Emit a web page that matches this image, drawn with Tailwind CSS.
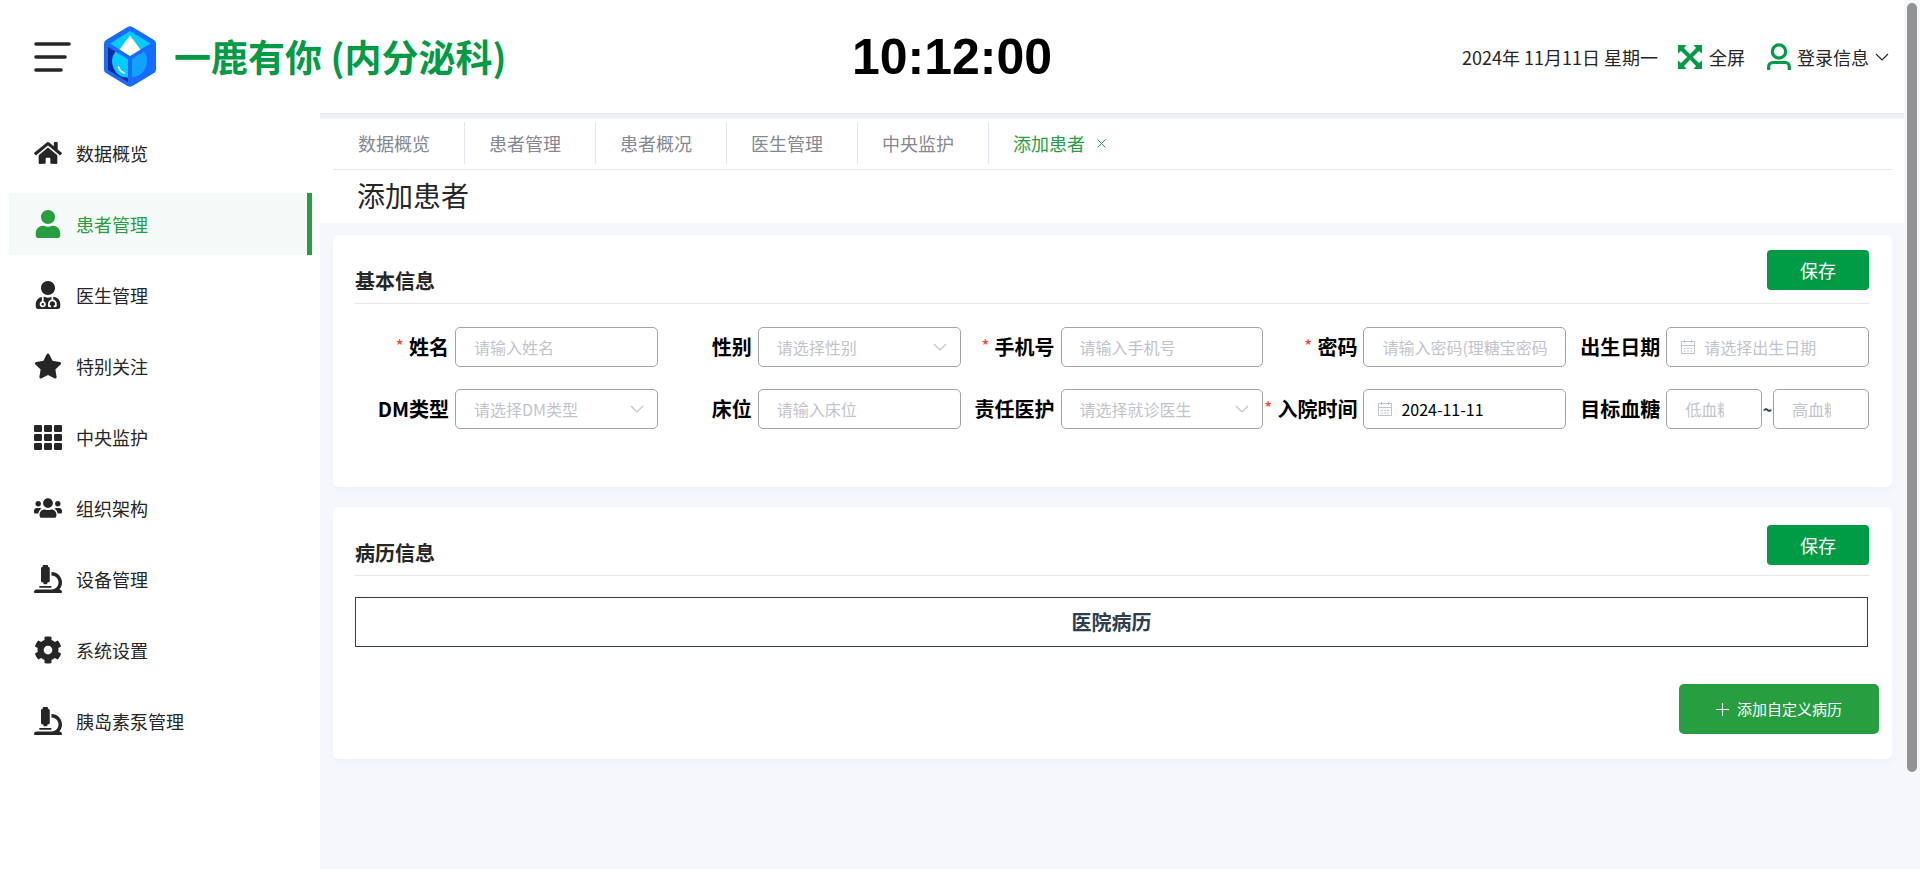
<!DOCTYPE html>
<html lang="zh-CN">
<head>
<meta charset="utf-8">
<title>添加患者</title>
<script src="https://cdn.jsdelivr.net/npm/@tailwindcss/browser@4"></script>
</head>
<body class="flex h-screen overflow-hidden bg-[#f5f7fb] font-['Noto_Sans_CJK_SC',sans-serif] font-normal text-[#262626]">
<svg class="hidden">
  <symbol id="microscope" viewBox="0 0 512 512"><path d="M160 320h12v16c0 8.84 7.16 16 16 16h40c8.84 0 16-7.16 16-16v-16h12c17.67 0 32-14.33 32-32V64c0-17.67-14.33-32-32-32V16c0-8.84-7.16-16-16-16h-64c-8.84 0-16 7.16-16 16v16c-17.67 0-32 14.33-32 32v224c0 17.67 14.33 32 32 32zm304 128h-1.29C493.24 413.99 512 369.2 512 320c0-105.88-86.12-192-192-192v64c70.58 0 128 57.42 128 128s-57.42 128-128 128H48c-26.51 0-48 21.49-48 48 0 8.84 7.16 16 16 16h480c8.84 0 16-7.16 16-16 0-26.51-21.49-48-48-48zm-360-32h208c4.42 0 8-3.58 8-8v-16c0-4.42-3.58-8-8-8H104c-4.42 0-8 3.58-8 8v16c0 4.42 3.58 8 8 8z"/></symbol>
  <symbol id="chevron" viewBox="0 0 14 8"><path d="M1 1l6 6 6-6" fill="none" stroke="currentColor" stroke-width="1.2"/></symbol>
  <symbol id="calendar" viewBox="0 0 16 16"><g fill="none" stroke="currentColor"><path d="M1.500 2.500h13v12h-13zM1.500 6.500h13M4.500 1v3M11.500 1v3"/><path d="M4 9.500h8M4 12h8" stroke-dasharray="2 1"/></g></symbol>
</svg>
<div class="flex min-w-0 flex-1 flex-col">
  <header class="grid h-[113px] shrink-0 grid-cols-[1fr_auto_1fr] items-center bg-white">
    <div class="flex items-center pl-[34px]">
      <button type="button" aria-label="折叠菜单">
        <svg class="h-[30px] w-[37px]" viewBox="0 0 37 30" fill="none" stroke="#262626" stroke-width="3.600" stroke-linecap="round"><path d="M2 2h33M2 15h29M2 28h25"/></svg>
      </button>
      <svg class="ml-[33px] h-[61px] w-[52px]" viewBox="0 0 52 61">
        <path d="M23.500 1q2.500-1.500 5 0L50 14q2 1.200 2 3.500v26q0 2.300-2 3.500L28.500 60q-2.500 1.500-5 0L2 47q-2-1.200-2-3.500v-26Q0 15.200 2 14z" fill="#1a6aff"/>
        <path d="M26 5l20.500 12.500L26 30 6 17.500z" fill="#00ccff"/>
        <path d="M26 9.500l10.500 14L26 30l-10.500-6.500z" fill="#fff"/>
        <path d="M4 21l20 12v23L4 44z" fill="#0b2b9b"/>
        <path d="M11.500 25.500L24 33v18.500A15 16 0 0 1 11.500 25.500z" fill="#00ccff"/>
        <path d="M28 33l12-7.500a15 16 0 0 1-12 25.500z" fill="#0fa2ff"/>
        <path d="M14.500 41q1.500 4.500 5.500 6" stroke="#fff" stroke-width="1.800" fill="none" stroke-linecap="round"/>
      </svg>
      <h1 class="ml-[18px] text-[37px] leading-none font-bold whitespace-nowrap text-[#009b45]">一鹿有你 (内分泌科)</h1>
    </div>
    <time class="font-['Liberation_Sans',sans-serif] text-[50px] leading-none font-bold text-black">10:12:00</time>
    <div class="flex items-center justify-end pr-[15px] text-lg">
      <span class="mr-5">2024年 11月11日 星期一</span>
      <button type="button" class="mr-[22px] flex items-center gap-[7px]">
        <svg class="size-6" viewBox="0 0 24 24"><path d="M0 0h8.500L6 3l6 6.200L18 3 15.500 0H24v8.500L21 6l-6.200 6 6.200 6 3-2.500V24h-8.500l2.500-3-6-6.200L6 21l2.500 3H0v-8.500L3 18l6.200-6L3 6 0 8.500z" fill="#009b45"/></svg>
        全屏
      </button>
      <button type="button" class="flex items-center gap-[6px]">
        <svg class="h-7 w-6" viewBox="0 0 24 28" fill="none" stroke="#009b45" stroke-width="3.200"><circle cx="12" cy="8.500" r="6.700"/><path d="M1.700 27v-3.500a4 4 0 0 1 4-4h12.600a4 4 0 0 1 4 4V27"/></svg>
        登录信息
        <svg class="h-2 w-[14px]"><use href="#chevron"/></svg>
      </button>
    </div>
  </header>

  <div class="flex min-h-0 flex-1">
    <nav class="w-80 shrink-0 bg-white pt-[9px] pr-2 pl-[9px] text-lg">
      <ul class="flex flex-col gap-[9px]">
        <li><a href="#" class="flex h-[62px] items-center gap-[14px] pl-[25px]"><svg class="size-7" viewBox="0 0 576 512" fill="currentColor"><path d="M280.37 148.26L96 300.11V464a16 16 0 0 0 16 16l112.06-.29a16 16 0 0 0 15.92-16V368a16 16 0 0 1 16-16h64a16 16 0 0 1 16 16v95.64a16 16 0 0 0 16 16.050L464 480a16 16 0 0 0 16-16V300L295.67 148.26a12.19 12.19 0 0 0-15.3 0zM571.6 251.47L488 182.56V44.05a12 12 0 0 0-12-12h-56a12 12 0 0 0-12 12v72.61L318.47 43a48 48 0 0 0-61 0L4.34 251.47a12 12 0 0 0-1.6 16.9l25.5 31A12 12 0 0 0 45.15 301l235.22-193.74a12.19 12.19 0 0 1 15.3 0L530.9 301a12 12 0 0 0 16.9-1.6l25.5-31a12 12 0 0 0-1.7-16.93z"/></svg>数据概览</a></li>
        <li><a href="#" aria-current="page" class="flex h-[62px] items-center gap-[14px] border-r-5 border-[#279e40] bg-[#f4faf8] pl-[25px] text-[#279e40]"><svg class="size-7" viewBox="0 0 448 512" fill="currentColor"><path d="M224 256c70.7 0 128-57.3 128-128S294.7 0 224 0 96 57.3 96 128s57.3 128 128 128zm89.6 32h-16.7c-22.2 10.2-46.9 16-72.9 16s-50.6-5.8-72.9-16h-16.7C60.2 288 0 348.2 0 422.4V464c0 26.5 21.5 48 48 48h352c26.5 0 48-21.5 48-48v-41.6c0-74.2-60.2-134.4-134.4-134.4z"/></svg>患者管理</a></li>
        <li><a href="#" class="flex h-[62px] items-center gap-[14px] pl-[25px]"><svg class="size-7" viewBox="0 0 448 512" fill="currentColor"><path d="M224 256c70.7 0 128-57.3 128-128S294.7 0 224 0 96 57.3 96 128s57.3 128 128 128zM104 424c0 13.3 10.7 24 24 24s24-10.7 24-24-10.7-24-24-24-24 10.7-24 24zm216-135.4v49c36.5 7.4 64 39.8 64 78.4v41.7c0 7.6-5.4 14.2-12.9 15.7l-32.2 6.4c-4.3.9-8.5-1.9-9.4-6.3l-3.1-15.7c-.9-4.3 1.9-8.6 6.3-9.4l19.3-3.9V416c0-62.8-96-65.1-96 1.9v26.7l19.3 3.9c4.3.9 7.1 5.1 6.3 9.4l-3.1 15.7c-.9 4.3-5.1 7.1-9.4 6.3l-31.2-4.2c-7.9-1.1-13.8-7.8-13.8-15.9V416c0-38.6 27.5-70.9 64-78.4v-45.2c-2.2.7-4.4 1.1-6.6 1.9-18 6.3-37.3 9.8-57.4 9.8s-39.4-3.5-57.4-9.8c-7.4-2.6-14.900-4.2-22.600-5.200v81.600c23.100 6.900 40 28.100 40 53.400 0 30.900-25.100 56-56 56s-56-25.100-56-56c0-25.300 16.900-46.500 40-53.400v-80.400C48.500 301 0 355.800 0 422.400v44.800C0 491.900 20.100 512 44.800 512h358.400c24.700 0 44.800-20.100 44.800-44.800v-44.800c0-72-56.800-130.300-128-133.800z"/></svg>医生管理</a></li>
        <li><a href="#" class="flex h-[62px] items-center gap-[14px] pl-[25px]"><svg class="size-7" viewBox="0 0 576 512" fill="currentColor"><path d="M259.3 17.8L194 150.2 47.9 171.5c-26.2 3.8-36.7 36.1-17.7 54.6l105.7 103-25 145.5c-4.5 26.3 23.2 46 46.4 33.7L288 439.6l130.7 68.7c23.2 12.2 50.9-7.4 46.4-33.7l-25-145.5 105.7-103c19-18.5 8.5-50.8-17.7-54.6L382 150.2 316.7 17.8c-11.700-23.600-45.600-23.900-57.400 0z"/></svg>特别关注</a></li>
        <li><a href="#" class="flex h-[62px] items-center gap-[14px] pl-[25px]"><svg class="size-7" viewBox="0 0 28 28" fill="currentColor"><rect x="0" y="2" width="8" height="7" rx="1.200"/><rect x="10" y="2" width="8" height="7" rx="1.200"/><rect x="20" y="2" width="8" height="7" rx="1.200"/><rect x="0" y="11" width="8" height="7" rx="1.200"/><rect x="10" y="11" width="8" height="7" rx="1.200"/><rect x="20" y="11" width="8" height="7" rx="1.200"/><rect x="0" y="20" width="8" height="7" rx="1.200"/><rect x="10" y="20" width="8" height="7" rx="1.200"/><rect x="20" y="20" width="8" height="7" rx="1.200"/></svg>中央监护</a></li>
        <li><a href="#" class="flex h-[62px] items-center gap-[14px] pl-[25px]"><svg class="size-7" viewBox="0 0 640 512" fill="currentColor"><path d="M96 224c35.3 0 64-28.7 64-64s-28.7-64-64-64-64 28.7-64 64 28.7 64 64 64zm448 0c35.3 0 64-28.7 64-64s-28.7-64-64-64-64 28.7-64 64 28.7 64 64 64zm32 32h-64c-17.6 0-33.5 7.1-45.1 18.6 40.3 22.1 68.9 62 75.1 109.4h66c17.7 0 32-14.3 32-32v-32c0-35.3-28.7-64-64-64zm-256 0c61.9 0 112-50.1 112-112S381.9 32 320 32 208 82.1 208 144s50.1 112 112 112zm76.8 32h-8.3c-20.8 10-43.9 16-68.5 16s-47.6-6-68.5-16h-8.3C179.6 288 128 339.6 128 403.2V432c0 26.5 21.5 48 48 48h288c26.5 0 48-21.5 48-48v-28.8c0-63.6-51.6-115.2-115.2-115.2zm-223.7-13.4C161.500 263.1 145.600 256 128 256H64c-35.3 0-64 28.7-64 64v32c0 17.7 14.3 32 32 32h65.9c6.3-47.4 34.9-87.3 75.2-109.4z"/></svg>组织架构</a></li>
        <li><a href="#" class="flex h-[62px] items-center gap-[14px] pl-[25px]"><svg class="size-7" fill="currentColor"><use href="#microscope"/></svg>设备管理</a></li>
        <li><a href="#" class="flex h-[62px] items-center gap-[14px] pl-[25px]"><svg class="size-7" viewBox="0 0 512 512" fill="currentColor"><path d="M487.4 315.7l-42.6-24.6c4.3-23.2 4.3-47 0-70.2l42.6-24.6c4.9-2.8 7.1-8.6 5.5-14-11.1-35.6-30-67.8-54.7-94.6-3.8-4.1-10-5.1-14.8-2.3L380.8 110c-17.9-15.4-38.5-27.3-60.8-35.1V25.8c0-5.6-3.9-10.5-9.4-11.7-36.7-8.2-74.3-7.8-109.2 0-5.5 1.2-9.4 6.1-9.4 11.7V75c-22.2 7.9-42.8 19.8-60.8 35.1L88.7 85.5c-4.9-2.8-11-1.9-14.8 2.3-24.7 26.7-43.6 58.9-54.7 94.6-1.7 5.4.6 11.2 5.5 14L67.3 221c-4.3 23.2-4.3 47 0 70.2l-42.6 24.6c-4.9 2.8-7.1 8.6-5.5 14 11.1 35.6 30 67.8 54.7 94.6 3.8 4.1 10 5.1 14.8 2.3l42.6-24.6c17.9 15.4 38.5 27.3 60.8 35.1v49.2c0 5.6 3.9 10.5 9.4 11.7 36.7 8.2 74.3 7.8 109.2 0 5.5-1.2 9.4-6.1 9.4-11.7v-49.2c22.2-7.9 42.8-19.8 60.8-35.1l42.6 24.6c4.9 2.8 11 1.900 14.800-2.300 24.700-26.700 43.600-58.900 54.700-94.600 1.500-5.500-.7-11.300-5.600-14.100zM256 336c-44.100 0-80-35.900-80-80s35.900-80 80-80 80 35.900 80 80-35.900 80-80 80z"/></svg>系统设置</a></li>
        <li><a href="#" class="flex h-[62px] items-center gap-[14px] pl-[25px]"><svg class="size-7" fill="currentColor"><use href="#microscope"/></svg>胰岛素泵管理</a></li>
      </ul>
    </nav>

    <main class="min-w-0 flex-1">
      <div class="h-[6px] bg-linear-to-b from-[#e9ebf1] to-[#f5f6fb]"></div>
      <div class="h-[104px] bg-white px-3 pl-[13px]">
        <div class="flex h-[51px] border-b border-[#e5e6e8] pt-[3px] pl-px text-lg text-[#838893]">
          <a href="#" class="flex h-[42px] items-center border-r border-[#e3e4ee] pr-[34px] pl-6">数据概览</a>
          <a href="#" class="flex h-[42px] items-center border-r border-[#e3e4ee] pr-[34px] pl-6">患者管理</a>
          <a href="#" class="flex h-[42px] items-center border-r border-[#e3e4ee] pr-[34px] pl-6">患者概况</a>
          <a href="#" class="flex h-[42px] items-center border-r border-[#e3e4ee] pr-[34px] pl-6">医生管理</a>
          <a href="#" class="flex h-[42px] items-center border-r border-[#e3e4ee] pr-[34px] pl-6">中央监护</a>
          <a href="#" class="flex h-[42px] items-center gap-3 pl-6 text-[#279e40]">添加患者<svg class="size-[9px]" viewBox="0 0 9 9" stroke="currentColor"><path d="M.5.5l8 8M8.500.5l-8 8"/></svg></a>
        </div>
        <h2 class="pl-6 text-[28px] leading-[50px]">添加患者</h2>
      </div>

      <div class="flex flex-col gap-5 pt-3 pr-3 pl-[13px]">
        <form class="h-[252px] rounded-md bg-white pr-[23px] pl-[22px] shadow-[0_4px_8px_#edf3fb]">
          <div class="flex h-[69px] items-end justify-between border-b border-[#e5e6e8]">
            <h3 class="pb-2 text-xl font-bold">基本信息</h3>
            <button type="button" class="mb-[13px] h-10 w-[102px] rounded bg-[#009b45] text-lg text-white">保存</button>
          </div>
          <div class="grid grid-cols-5 gap-y-[22px] pt-[23px] text-base [&_label]:flex [&_label]:w-[100px] [&_label]:shrink-0 [&_label]:justify-end [&_label]:gap-[5px] [&_label]:pr-[6px] [&_label]:text-xl [&_label]:font-bold [&_label]:whitespace-nowrap [&_label]:text-black">
            <div class="flex items-center"><label for="name"><span class="text-lg leading-6 font-normal text-[#f5432f]">*</span>姓名</label>
              <input id="name" type="text" placeholder="请输入姓名" class="h-10 w-full min-w-0 rounded-[5px] border border-[#a3a3a3] px-[18px] placeholder:text-[#bfc3cb]"></div>
            <div class="flex items-center"><label for="sex">性别</label>
              <div class="relative flex-1"><select id="sex" class="h-10 w-full appearance-none rounded-[5px] border border-[#a3a3a3] px-[18px] text-[#bfc3cb]"><option>请选择性别</option></select><svg class="pointer-events-none absolute top-4 right-[14px] h-2 w-[14px] text-[#bfc3cb]"><use href="#chevron"/></svg></div></div>
            <div class="flex items-center"><label for="phone"><span class="text-lg leading-6 font-normal text-[#f5432f]">*</span>手机号</label>
              <input id="phone" type="tel" placeholder="请输入手机号" class="h-10 w-full min-w-0 rounded-[5px] border border-[#a3a3a3] px-[18px] placeholder:text-[#bfc3cb]"></div>
            <div class="flex items-center"><label for="pwd"><span class="text-lg leading-6 font-normal text-[#f5432f]">*</span>密码</label>
              <input id="pwd" type="password" placeholder="请输入密码(理糖宝密码)" class="h-10 w-full min-w-0 rounded-[5px] border border-[#a3a3a3] px-[18px] placeholder:text-[#bfc3cb]"></div>
            <div class="flex items-center"><label for="birth">出生日期</label>
              <div class="relative flex-1"><input id="birth" type="text" placeholder="请选择出生日期" class="h-10 w-full rounded-[5px] border border-[#a3a3a3] pr-4 pl-[37px] placeholder:text-[#bfc3cb]"><svg class="absolute top-3 left-[14px] size-4 text-[#bfc3cb]"><use href="#calendar"/></svg></div></div>

            <div class="flex items-center"><label for="dm">DM类型</label>
              <div class="relative flex-1"><select id="dm" class="h-10 w-full appearance-none rounded-[5px] border border-[#a3a3a3] px-[18px] text-[#bfc3cb]"><option>请选择DM类型</option></select><svg class="pointer-events-none absolute top-4 right-[14px] h-2 w-[14px] text-[#bfc3cb]"><use href="#chevron"/></svg></div></div>
            <div class="flex items-center"><label for="bed">床位</label>
              <input id="bed" type="text" placeholder="请输入床位" class="h-10 w-full min-w-0 rounded-[5px] border border-[#a3a3a3] px-[18px] placeholder:text-[#bfc3cb]"></div>
            <div class="flex items-center"><label for="doctor">责任医护</label>
              <div class="relative flex-1"><select id="doctor" class="h-10 w-full appearance-none rounded-[5px] border border-[#a3a3a3] px-[18px] text-[#bfc3cb]"><option>请选择就诊医生</option></select><svg class="pointer-events-none absolute top-4 right-[14px] h-2 w-[14px] text-[#bfc3cb]"><use href="#chevron"/></svg></div></div>
            <div class="flex items-center"><label for="admit"><span class="text-lg leading-6 font-normal text-[#f5432f]">*</span>入院时间</label>
              <div class="relative flex-1"><input id="admit" type="text" value="2024-11-11" class="h-10 w-full rounded-[5px] border border-[#a3a3a3] pr-4 pl-[37px] text-black"><svg class="absolute top-3 left-[14px] size-4 text-[#bfc3cb]"><use href="#calendar"/></svg></div></div>
            <div class="flex items-center"><label for="low">目标血糖</label>
              <input id="low" type="text" placeholder="低血糖" class="h-10 min-w-0 flex-1 rounded-[5px] border border-[#a3a3a3] pr-[37px] pl-[18px] placeholder:text-[#bfc3cb]"><span class="w-[11px] text-center font-bold text-[#2c3e50]">~</span><input aria-label="高血糖" type="text" placeholder="高血糖" class="h-10 min-w-0 flex-1 rounded-[5px] border border-[#a3a3a3] pr-[37px] pl-[18px] placeholder:text-[#bfc3cb]"></div>
          </div>
        </form>

        <section class="h-[252px] rounded-md bg-white pr-[23px] pl-[22px] shadow-[0_4px_8px_#edf3fb]">
          <div class="flex h-[69px] items-end justify-between border-b border-[#e5e6e8]">
            <h3 class="pb-2 text-xl font-bold">病历信息</h3>
            <button type="button" class="mb-[10px] h-10 w-[102px] rounded bg-[#009b45] text-lg text-white">保存</button>
          </div>
          <h4 class="mt-[21px] mr-px flex h-[50px] items-center justify-center border border-[#2c3e50] text-xl font-bold text-[#2c3e50]">医院病历</h4>
          <div class="mt-[37px] -mr-[10px] flex justify-end">
            <button type="button" class="flex h-[50px] w-[200px] items-center justify-center gap-2 rounded-[5px] bg-[#279e40] text-[15px] text-white"><svg class="size-[13px]" viewBox="0 0 13 13" stroke="currentColor"><path d="M6.500 0v13M0 6.500h13"/></svg>添加自定义病历</button>
          </div>
        </section>
      </div>
    </main>
  </div>
</div>
<div class="w-4 shrink-0 px-[3px] pt-[3px]"><div class="h-[769px] rounded-full bg-[#939395]"></div></div>
</body>
</html>
